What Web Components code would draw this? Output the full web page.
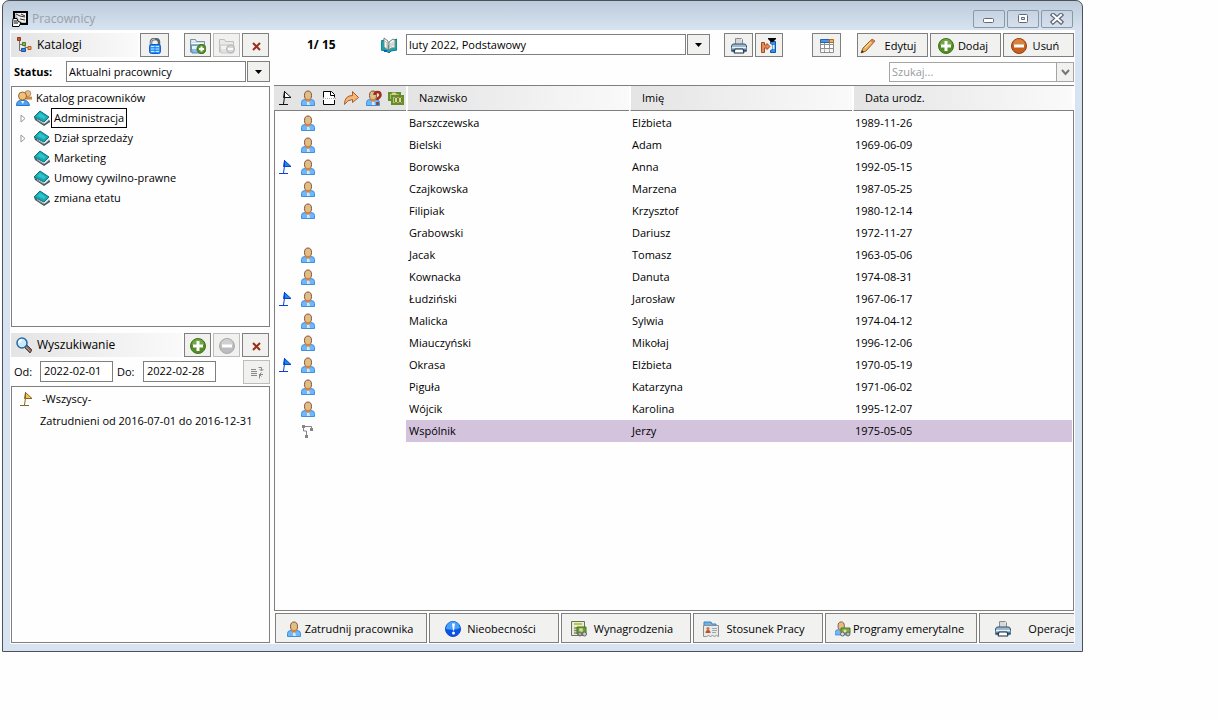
<!DOCTYPE html>
<html lang="pl">
<head>
<meta charset="utf-8">
<meta name="viewport" content="width=device-width, initial-scale=1">
<title>Pracownicy</title>
<style>
  :root {
    --line: #7f7f7f;
    --face: #f1f1f0;
    --frame: #d7e3f0;
    --bar: linear-gradient(to right, #e4e4e4, #fafafa);
    --selected: #d3c3dc;
  }
  body {
    margin: 0;
    background: #fefefe;
    color: #000;
    font: 11px/20px "Open Sans", "Noto Sans", sans-serif;
  }
  app-window {
    margin: 0 135px 0 2px;
    min-height: calc(100vh - 69px);
  }
  .side, .main, .group { display: flex; flex-direction: column; min-width: 0; }
  .side { flex: 0 0 259px; }
  .main { flex: 1; }
  .group { gap: 4px; }
  .group + .group { gap: 2px; margin-top: 6px; flex: 1; }
  .row { display: flex; align-items: center; gap: 2px; }
  .dates { height: 25px; gap: 4px; padding-left: 3px; }
  .dates tool-button { margin-left: auto; }
  .tree { min-height: 238px; }
  .fill { flex: 1; }
  .top { height: 24px; }
  .count { flex: 0 0 72px; padding-left: 33px; font-weight: 700; font-size: 12px; }
  .period { align-self: flex-start; flex: 0 1 304px; margin: 1px 12px 0 7px; }
  .tools { margin-left: auto; }
  .search { display: flex; justify-content: flex-end; margin: 5px 0 3px; }
  employee-grid { flex: 1; }
  action-bar { margin-top: 2px; }
</style>
</head>
<body>

<app-window caption="Pracownicy">
  <div class="side">
    <div class="group">
      <panel-bar icon="tree" caption="Katalogi">
        <tool-button icon="lock" label="Zablokuj" style="--w:29px;margin-right:13px"></tool-button>
        <tool-button icon="folder-add" label="Dodaj katalog"></tool-button>
        <tool-button icon="folder-del" label="Usuń katalog" off></tool-button>
        <tool-button icon="cross" label="Zamknij katalogi"></tool-button>
      </panel-bar>
      <combo-box caption="Status:" value="Aktualni pracownicy"></combo-box>
      <list-frame class="tree">
        <tree-item icon="people" text="Katalog pracowników" root></tree-item>
        <tree-item icon="book" text="Administracja" branch current></tree-item>
        <tree-item icon="book" text="Dział sprzedaży" branch></tree-item>
        <tree-item icon="book" text="Marketing"></tree-item>
        <tree-item icon="book" text="Umowy cywilno-prawne"></tree-item>
        <tree-item icon="book" text="zmiana etatu"></tree-item>
      </list-frame>
    </div>
    <div class="group">
      <panel-bar icon="lens" caption="Wyszukiwanie">
        <tool-button icon="plus" label="Dodaj filtr"></tool-button>
        <tool-button icon="minus-off" label="Usuń filtr" off></tool-button>
        <tool-button icon="cross" label="Zamknij wyszukiwanie"></tool-button>
      </panel-bar>
      <div class="row dates">
        <date-field caption="Od:" value="2022-02-01"></date-field>
        <date-field caption="Do:" value="2022-02-28"></date-field>
        <tool-button icon="sort" label="Sortuj" off></tool-button>
      </div>
      <list-frame class="fill">
        <filter-item icon="flag-yellow" text="-Wszyscy-"></filter-item>
        <filter-item text="Zatrudnieni od 2016-07-01 do 2016-12-31"></filter-item>
      </list-frame>
    </div>
  </div>

  <div class="main">
    <div class="row top">
      <span class="count">1/ 15</span>
      <ui-icon name="open-book"></ui-icon>
      <combo-box class="period" label="Okres" value="luty 2022, Podstawowy"></combo-box>
      <tool-button icon="printer" label="Drukuj" style="--w:29px"></tool-button>
      <tool-button icon="export" label="Eksport" style="--w:28px"></tool-button>
      <div class="row tools">
        <tool-button icon="columns" label="Kolumny" style="--w:29px;margin-right:14px"></tool-button>
        <tool-button icon="pencil" text="Edytuj" style="--w:71px;--start:2px;--end:2px"></tool-button>
        <tool-button icon="plus" text="Dodaj" style="--w:71px;--start:7px;--end:8px"></tool-button>
        <tool-button icon="minus" text="Usuń" style="--w:71px;--start:7px;--end:8px"></tool-button>
      </div>
    </div>
    <div class="search"><search-box hint="Szukaj..."></search-box></div>
    <employee-grid></employee-grid>
    <action-bar>
      <tool-button icon="person" text="Zatrudnij pracownika" style="--w:152px;--h:30px;--start:10px;--end:10px"></tool-button>
      <tool-button icon="alert" text="Nieobecności" style="--w:130px;--h:30px;--start:15px;--end:16px"></tool-button>
      <tool-button icon="payroll" text="Wynagrodzenia" style="--w:130px;--h:30px;--start:9px;--end:10px"></tool-button>
      <tool-button icon="contract" text="Stosunek Pracy" style="--w:130px;--h:30px;--start:9px;--end:10px"></tool-button>
      <tool-button icon="pension" text="Programy emerytalne" style="--w:152px;--h:30px;--start:9px;--end:10px"></tool-button>
      <tool-button icon="printer" text="Operacje" style="--w:130px;--h:30px;--start:15px;--end:16px"></tool-button>
    </action-bar>
  </div>
</app-window>

<script>
// ---- icons, all on a 16x16 grid ----
const PERSON = `
  <path d="M1.500 15.500v-3q0-3 3.500-3l3 2 3-2q3.500 0 3.500 3v3z" fill="#6cb8fb" stroke="#3f8fdc"/>
  <path d="M7 11h2l1 4H7z" fill="#d4e8f5"/>
  <ellipse cx="8" cy="5.500" rx="3.500" ry="4.500" fill="#dcc085" stroke="#8f4a38"/>
  <path d="M5 8q3 2 6 0l-1 3q-2 1.500-4 0z" fill="#d98240"/>`;
const FLAG = (line, fill) => `
  <path d="M6.500 1.500 13 7.500H5.500z" fill="${fill}" stroke="${line}"/>
  <path d="M6.500 1v6L5.500 14M1 14.500h9" fill="none" stroke="${line}"/>`;
const ROUND = (dark, mid, light, plus) => `
  <circle cx="8" cy="8" r="7.500" fill="${mid}" stroke="${dark}"/>
  <path d="M2 7a6 6 0 0 1 12 0q-6 2-12 0z" fill="${light}" opacity=".6"/>
  <path d="M3 6.500h10v3H3z" fill="#fff"/>
  ${plus ? '<path d="M6.500 3h3v10h-3z" fill="#fff"/>' : ""}`;
const FOLDER = `
  <path d="M.5 14V1.500h5l1 2h8V14z" fill="#cfdde6" stroke="#7b91a0"/>
  <path d="M2 3h3M1.500 5.500h12" stroke="#f8fcff"/>
  <path d="M1 7h14l-1 8H2z" fill="#8bbfe8" stroke="#5c87ad"/>
  <path d="M2 8h12v3H2z" fill="#e3f2fb"/>`;

const ICONS = {
  person: PERSON,
  app: `
    <path d="M2 1h13v12H2z" fill="#bbb" stroke="#000" stroke-width="2"/>
    <path d="M3 2h11v9H8z" fill="#ededed"/>
    <path d="M4 3l4 2 5 1M9 3l4 2M8 8l5 1" fill="none" stroke="#333"/>
    <path d="M1 7.500h4l1 3 3 1-2 4H.5z" fill="#fff" stroke="#000"/>
    <path d="M2 10h3M2 12h4" stroke="#000"/>`,
  tree: `
    <path d="M3.500 4v9.500h6M4 7.500h5v3h4" fill="none" stroke="#6f7275"/>
    <path d="M1.500.5h3v3h-3z" fill="#c4583a" stroke="#943719"/>
    <path d="M6.500 5.500h3v3h-3z" fill="#8db84a" stroke="#4d792a"/>
    <path d="M5.500 11.500h4v3h-4z" fill="#3686dd" stroke="#1952a3"/>
    <path d="M12 9.500h3v3h-3z" fill="#f0a45c" stroke="#b85d22"/>`,
  lock: `
    <path d="M4 8V4q0-3 4-3t4 3v4" fill="none" stroke="#5b666c" stroke-width="2.500"/>
    <path d="M4 7V4q0-3 4-3" fill="none" stroke="#b9c4c8"/>
    <rect x="2.500" y="6.500" width="11" height="9" rx="2" fill="#2496ff" stroke="#2054cc"/>
    <path d="M4 8.500h8M4 11h8M4 13.500h8" stroke="#c9eaff"/>
    <path d="M8 8v7" stroke="#217fe2"/>`,
  "folder-add": FOLDER + `
    <circle cx="11.500" cy="11" r="4.500" fill="#5c962e" stroke="#396b16"/>
    <path d="M11.500 8.500v5M9 11h5" stroke="#fff" stroke-width="2"/>`,
  "folder-del": `
    <g opacity=".7"><path d="M.5 14V1.500h5l1 2h8V14z" fill="#e6e6e6" stroke="#aaa"/>
    <path d="M1 7h14l-1 8H2z" fill="#ddd" stroke="#bbb"/><path d="M2 8h12v3H2z" fill="#f3f3f3"/>
    <circle cx="11.500" cy="11" r="4" fill="#ccc" stroke="#999"/>
    <path d="M9 11h5" stroke="#fff" stroke-width="2"/></g>`,
  cross: `<path d="M5 5l7 7M12 5l-7 7" stroke="#99301a" stroke-width="2"/>`,
  people: `
    <g transform="translate(7 0) scale(.6)">
      <path d="M1 16v-5h14v5z" fill="#c98a45"/>
      <circle cx="8" cy="6" r="5" fill="#e4bd82" stroke="#a4622f"/>
    </g>
    <path d="M.5 15.500q0-5 4-5h4q4 0 5 5z" fill="#4ea3f3" stroke="#2a76c4"/>
    <circle cx="6.500" cy="6" r="4" fill="#efc37c" stroke="#a46031"/>
    <path d="M5 11h3l-1 3z" fill="#fff"/>`,
  book: `
    <path d="M0 7l1 3 9 6 6-4v-2l-6 3z" fill="#4b565b"/>
    <path d="M1 8l9 6 6-4-1-2-5 3z" fill="#e1e5e8"/>
    <path d="M3 10l7 4M13 12l2-2" stroke="#8b979d"/>
    <path d="M0 7l6-6 9 6-5 5z" fill="#16a9b4" stroke="#087383"/>
    <path d="M3 6l3-3 6 4-2 2z" fill="#35c2c7"/>`,
  "open-book": `
    <path d="M0 4l3-1 6 8 4-8 3-1v11l-6 1-2 2-3-2-5-1z" fill="#14a6b1" stroke="#107782"/>
    <path d="M3 1l4 3v9l-4-3z" fill="#f8f8f4" stroke="#77877f"/>
    <path d="M8 13V5l4-3 2 1v8q-4-1-6 2z" fill="#eef1ed" stroke="#77877f"/>
    <path d="M4 4l2 2v5M10 6v4M12 5v4" fill="none" stroke="#b4c0b5"/>
    <path d="M3 14h3" stroke="#125bb9" stroke-width="2"/>`,
  lens: `
    <path d="M9 9l2-1 5 5-2 3-5-5z" fill="#7d615a" stroke="#57433e"/>
    <path d="M10 10l4 4" stroke="#b1a19b"/>
    <circle cx="6" cy="6" r="5" fill="#c5ecff" stroke="#2969a8" stroke-width="1.500"/>
    <path d="M3 6q0-3 3-3" fill="none" stroke="#fff" stroke-width="2"/>`,
  plus: ROUND("#427317", "#538d27", "#86b85b", true),
  minus: ROUND("#963e13", "#c6601c", "#e99953", false),
  "minus-off": ROUND("#aaa", "#bcbcc0", "#ddd", false),
  sort: `
    <path d="M2 5.500h5M2 7.500h6M2 9.500h6M2 11.500h6" stroke="#888"/>
    <path d="M9.500 3.500h3v3M10.500 5l2 2 2-2M14 10.500h-3.500v4M12.500 8.500l-2 2 2 2" fill="none" stroke="#888"/>`,
  "flag-line": FLAG("#111", "#fff"),
  "flag-blue": FLAG("#0b3fd5", "#148ce8"),
  "flag-yellow": FLAG("#826725", "#ffc14f"),
  page: `
    <path d="M1.500 7.500v-6h8l3 3v3M1.500 10v4.500h11V10" fill="#fff" stroke="#000"/>
    <path d="M2 7h10v4H2z" fill="#fff"/>
    <path d="M8.500 1.500v4h4" fill="none" stroke="#000"/><path d="M1 8.500h13" stroke="#aaa" stroke-dasharray="1 1"/>`,
  arrow: `<path d="M.5 14.500q0-9 8-9v-4l6 6-6 5v-3q-5 0-8 5z" fill="#f5b778" stroke="#a85d2c"/>`,
  asker: `<g transform="translate(-1 0)">${PERSON}</g>
    <path d="M8.500 5q0-3 3-3t3 3q0 2-3 3.500V10M11.500 12v3" fill="none" stroke="#a22d16" stroke-width="2.500"/>`,
  money: `
    <path d="M1 3h11v7H1z" fill="#b9bd76" stroke="#609128" stroke-width="2"/>
    <path d="M4 6h11v8H4z" fill="#c6c084" stroke="#609128" stroke-width="2"/>
    <path d="M4 4q2-1 4 0" fill="none" stroke="#e4d19e" stroke-width="2"/>
    <path d="M6.500 8q1.500-2 3 0v4q-1.500 2-3 0zM10.500 8q1.500-2 3 0v4q-1.500 2-3 0z" fill="#e4d19e" stroke="#6a7d29"/>`,
  partner: `<g fill="#858585"><path d="M2 2h3v3H2zM10 5h3v3h-3zM5 12h3v3H5z"/></g>
    <path d="M4 3.500h7.500V6M3.500 5v3h3v5" fill="none" stroke="#858585"/>`,
  printer: `
    <path d="M4.500 7V.5h6l1 1V7z" fill="#fff" stroke="#8b8b8f"/>
    <path d="M5 1h5l1 2v3H5z" fill="#d8d8dc"/>
    <path d="M1 7q0-1 2-1h10q2 0 2 1l1 3v3H0v-3z" fill="#9ab9d3" stroke="#344e69"/>
    <path d="M1 9.500h14" stroke="#e6f1f8"/><path d="M1 12.500h14" stroke="#234f82" stroke-width="2"/>
    <path d="M4 11h8l1 4H3z" fill="#fff" stroke="#182a3d"/>`,
  export: `
    <path d="M.5 4.500h3V7H6V5.500l3 3-3 3V10H3.500v4.500h-3z" fill="#e58a58" stroke="#a8481c"/>
    <path d="M9.500 3.500h5v11h-5v-2l2-1v-5l-2-1z" fill="#2a94ec" stroke="#1656aa"/><path d="M11.500 7h2v4h-2z" fill="#d5f0ff"/>
    <path d="M7 0h8v1l-3 3H10L7 1z" fill="#000"/>`,
  columns: `
    <path d="M1.500 2.500h13v12h-13z" fill="#fff" stroke="#8d8d94"/>
    <path d="M1 6.500h14M1 10.500h14M5.500 5v9M10.500 5v9" stroke="#8d8d94"/>
    <path d="M2 12h12" stroke="#e4e4e7"/>
    <path d="M1.500 1.500h9v3h-9z" fill="#4f97dc" stroke="#2460ad"/><path d="M10.500 1.500h4v3h-4z" fill="#f2b35a" stroke="#b26a1e"/>`,
  pencil: `
    <path d="M1 15l2-5L12 1l3 2-9 10z" fill="#efb25c" stroke="#9a6124"/>
    <path d="M5 10l8-8" stroke="#ffe2a0"/><path d="M12 1l3 2-2 2-3-2z" fill="#d77a5c"/><path d="M1 15l1-3 2 2z" fill="#333"/>`,
  alert: `
    <circle cx="8" cy="8" r="7.500" fill="#0b54e4" stroke="#0b4ed0"/>
    <path d="M1 8a7 7 0 0 1 14-1q-5 3-14 1z" fill="#46a2f8"/>
    <path d="M7 2.500h3l-1 7H8z" fill="#fff"/><circle cx="8.500" cy="12" r="1.500" fill="#fff"/>`,
  payroll: `
    <path d="M.5.500h13v14H.5z" fill="#e8ebd6" stroke="#687061"/>
    <path d="M3 2h8v2H3z" fill="#c5c23f"/><path d="M3 7h3M3 9.500h3M3 12h3" stroke="#848c79" stroke-width="1.500"/>
    <path d="M6 6h9v7H6z" fill="#6f9f35" stroke="#43721f"/>
    <circle cx="10" cy="9" r="2" fill="#d3d998"/><circle cx="9" cy="13" r="2" fill="#aaa" stroke="#666"/><circle cx="13.500" cy="13" r="2" fill="#ccc" stroke="#666"/>`,
  contract: `
    <path d="M1 5V1h7l1 2h4v4z" fill="#69b4ef" stroke="#3d83be"/>
    <path d="M.5 15.500v-11h15v11l-2-1-2 1-2-1-2 1-2-1-2 1z" fill="#e7e9ea" stroke="#8c9093"/>
    <circle cx="5" cy="7.500" r="1.500" fill="#cf7142"/><path d="M2.500 12q0-3 2.500-3t2.500 3z" fill="#bd5127"/>
    <path d="M9 7.500h5M9 9.500h5M9 11.500h4" stroke="#a4a7aa"/>`,
  pension: `
    <g transform="translate(-1 0) scale(.9)">${PERSON}</g>
    <path d="M6 7h9v5H6z" fill="#82ac3e" stroke="#49782a"/>
    <circle cx="7.500" cy="13" r="2" fill="#ddd" stroke="#666"/><circle cx="13" cy="13" r="2" fill="#bbb" stroke="#666"/><circle cx="10" cy="10" r="1.500" fill="#e3e3a5"/>`,
};

class UiIcon extends HTMLElement {
  connectedCallback() {
    this.attachShadow({ mode: "open" }).innerHTML = `
      <style>
        :host { display: block; flex: 0 0 16px; width: 16px; height: 16px; }
        svg { display: block; }
      </style>
      <svg width="16" height="16" viewBox="0 0 16 16" aria-hidden="true">${ICONS[this.getAttribute("name")] || ""}</svg>`;
  }
}

/* <tool-button icon text label off>: --w, --h, --start and --end set its box */
class ToolButton extends HTMLElement {
  connectedCallback() {
    const text = this.getAttribute("text");
    const label = this.getAttribute("label");
    this.attachShadow({ mode: "open" }).innerHTML = `
      <style>
        :host { display: block; flex: none; width: var(--w, 27px); height: var(--h, 24px); }
        button {
          box-sizing: border-box;
          width: 100%;
          height: 100%;
          display: flex;
          align-items: center;
          justify-content: center;
          margin: 0;
          padding: 1px var(--end, 0) 0 var(--start, 0);
          border: 1px solid var(--line);
          background: var(--face);
          color: inherit;
          font: inherit;
          white-space: nowrap;
        }
        button:disabled { border-color: #bdbdbd; }
        span { flex: 1; text-align: center; }
      </style>
      <button type="button" ${label ? `aria-label="${label}"` : ""} ${this.hasAttribute("off") ? "disabled" : ""}>
        <ui-icon name="${this.getAttribute("icon")}"></ui-icon>${text ? `<span>${text}</span>` : ""}
      </button>`;
  }
}

class AppWindow extends HTMLElement {
  connectedCallback() {
    this.attachShadow({ mode: "open" }).innerHTML = `
      <style>
        :host {
          box-sizing: border-box;
          display: flex;
          flex-direction: column;
          border: 1px solid #4c5158;
          border-radius: 7px 7px 0 0;
          padding: 0 7px 7px;
          background: linear-gradient(#bccbdb, var(--frame) 29px);
        }
        header { display: flex; align-items: center; height: 29px; padding: 6px 0 0 2px; box-sizing: border-box; }
        h1 { flex: 1; margin: 0 0 0 4px; font: inherit; font-size: 12px; color: #98a1aa; }
        .controls { display: flex; gap: 2px; padding-right: 2px; }
        .controls button {
          width: 32px;
          height: 18px;
          padding: 0;
          border: 1px solid #8b98a8;
          border-radius: 2px;
          background: linear-gradient(#c6d3e2, #d5e0ec);
        }
        .controls svg { display: block; margin: auto; }
        main { flex: 1; display: flex; gap: 4px; padding: 3px 1px 1px; background: #fefefe; }
      </style>
      <header>
        <ui-icon name="app"></ui-icon>
        <h1>${this.getAttribute("caption")}</h1>
        <div class="controls">
          <button type="button" aria-label="Minimalizuj"><svg width="14" height="12"><rect x="1.500" y="5.500" width="10" height="4" rx="1" fill="#fff" stroke="#626879"/></svg></button>
          <button type="button" aria-label="Maksymalizuj"><svg width="14" height="12"><rect x="2.500" y="1.500" width="9" height="8" rx="1" fill="#fff" stroke="#626879"/><path d="M5.500 4.500h3v2h-3z" fill="#dce4ee" stroke="#626879"/></svg></button>
          <button type="button" aria-label="Zamknij"><svg width="14" height="12"><path d="M3 2l8 7M11 2l-8 7" stroke="#626879" stroke-width="4.500" stroke-linecap="square"/><path d="M3 2l8 7M11 2l-8 7" stroke="#fff" stroke-width="2" stroke-linecap="square"/></svg></button>
        </div>
      </header>
      <main><slot></slot></main>`;
  }
}

class PanelBar extends HTMLElement {
  connectedCallback() {
    this.attachShadow({ mode: "open" }).innerHTML = `
      <style>
        :host { display: flex; gap: 2px; height: 24px; padding-right: 1px; }
        h2 {
          flex: 1;
          display: flex;
          align-items: center;
          gap: 5px;
          margin: 0;
          padding-left: 5px;
          font: inherit;
          font-size: 12px;
          background: var(--bar);
        }
      </style>
      <h2><ui-icon name="${this.getAttribute("icon")}"></ui-icon>${this.getAttribute("caption")}</h2>
      <slot></slot>`;
  }
}

class ComboBox extends HTMLElement {
  connectedCallback() {
    const caption = this.getAttribute("caption");
    this.attachShadow({ mode: "open" }).innerHTML = `
      <style>
        :host { display: flex; align-items: center; height: 21px; }
        label { flex: 0 0 52px; padding-left: 3px; font-weight: 700; }
        select {
          appearance: none;
          box-sizing: border-box;
          flex: 1;
          min-width: 0;
          height: 21px;
          margin: 0 1px 0 0;
          padding: 0 2px 2px;
          border: 1px solid var(--line);
          border-radius: 0;
          background: #fff;
          color: inherit;
          font: inherit;
        }
        button {
          flex: 0 0 23px;
          height: 21px;
          padding: 0;
          border: 1px solid var(--line);
          background: var(--face);
        }
        svg { display: block; margin: auto; }
      </style>
      ${caption ? `<label for="pole">${caption}</label>` : ""}
      <select id="pole" ${caption ? "" : `aria-label="${this.getAttribute("label")}"`}>
        <option>${this.getAttribute("value")}</option>
      </select>
      <button type="button" aria-label="Rozwiń"><svg width="7" height="4"><path d="M0 0h7L3.500 4z"/></svg></button>`;
  }
}

class DateField extends HTMLElement {
  connectedCallback() {
    this.attachShadow({ mode: "open" }).innerHTML = `
      <style>
        :host { display: flex; align-items: center; }
        label { width: 26px; }
        input {
          box-sizing: border-box;
          width: 73px;
          height: 21px;
          padding: 0 2px 2px 3px;
          border: 1px solid var(--line);
          color: inherit;
          font: inherit;
        }
      </style>
      <label for="data">${this.getAttribute("caption")}</label>
      <input id="data" type="text" value="${this.getAttribute("value")}">`;
  }
}

class SearchBox extends HTMLElement {
  connectedCallback() {
    const hint = this.getAttribute("hint");
    this.attachShadow({ mode: "open" }).innerHTML = `
      <style>
        :host { box-sizing: border-box; display: flex; width: 185px; height: 20px; border: 1px solid #a5a5a5; }
        input { flex: 1; min-width: 0; border: 0; padding: 0 2px; font: inherit; background: #fff; }
        input::placeholder { color: #9b9b9b; opacity: 1; }
        button { width: 17px; padding: 0; border: 0; border-left: 1px solid #a5a5a5; background: var(--face); }
        svg { display: block; margin: auto; }
      </style>
      <input type="text" placeholder="${hint}" aria-label="${hint}">
      <button type="button" aria-label="Historia"><svg width="9" height="7"><path d="M1 1l3.500 4L8 1" fill="none" stroke="#777" stroke-width="2"/></svg></button>`;
  }
}

class ListFrame extends HTMLElement {
  connectedCallback() {
    this.attachShadow({ mode: "open" }).innerHTML = `
      <style>
        :host { display: block; border: 1px solid var(--line); background: #fefefe; padding-top: 1px; }
      </style>
      <slot></slot>`;
  }
}

class TreeItem extends HTMLElement {
  connectedCallback() {
    const branch = this.hasAttribute("branch");
    this.attachShadow({ mode: "open" }).innerHTML = `
      <style>
        :host { display: flex; align-items: center; height: 20px; padding-left: 7px; }
        :host([root]) { padding-left: 4px; }
        svg { width: 15px; height: 9px; }
        :host([root]) svg { display: none; }
        span { margin-left: 1px; padding: 0 2px; line-height: 18px; border: 1px solid transparent; white-space: nowrap; }
        :host([current]) span { border-color: #000; }
      </style>
      <svg viewBox="0 0 15 9">${branch ? '<path d="M2 1v7l4-3.500z" fill="#fff" stroke="#999"/>' : ""}</svg>
      <ui-icon name="${this.getAttribute("icon")}"></ui-icon>
      <span>${this.getAttribute("text")}</span>`;
  }
}

class FilterItem extends HTMLElement {
  connectedCallback() {
    const icon = this.getAttribute("icon");
    this.attachShadow({ mode: "open" }).innerHTML = `
      <style>
        :host { display: flex; align-items: center; gap: 5px; height: 22px; padding-left: 7px; white-space: nowrap; }
        :host([icon]) { gap: 7px; }
      </style>
      <ui-icon name="${icon || ""}"></ui-icon>
      <span>${this.getAttribute("text")}</span>`;
  }
}

const EMPLOYEES = [
  ["Barszczewska", "Elżbieta", "1989-11-26"],
  ["Bielski", "Adam", "1969-06-09"],
  ["Borowska", "Anna", "1992-05-15", { flag: true }],
  ["Czajkowska", "Marzena", "1987-05-25"],
  ["Filipiak", "Krzysztof", "1980-12-14"],
  ["Grabowski", "Dariusz", "1972-11-27", { icon: "" }],
  ["Jacak", "Tomasz", "1963-05-06"],
  ["Kownacka", "Danuta", "1974-08-31"],
  ["Łudziński", "Jarosław", "1967-06-17", { flag: true }],
  ["Malicka", "Sylwia", "1974-04-12"],
  ["Miauczyński", "Mikołaj", "1996-12-06"],
  ["Okrasa", "Elżbieta", "1970-05-19", { flag: true }],
  ["Piguła", "Katarzyna", "1971-06-02"],
  ["Wójcik", "Karolina", "1995-12-07"],
  ["Wspólnik", "Jerzy", "1975-05-05", { icon: "partner", selected: true }],
];

class EmployeeGrid extends HTMLElement {
  connectedCallback() {
    const heads = ["flag-line", "person", "page", "arrow", "asker", "money"]
      .map((name) => `<th class="mark"><ui-icon name="${name}"></ui-icon></th>`)
      .join("");
    const rows = EMPLOYEES.map(([surname, name, born, opt = {}]) => {
      const icon = opt.icon === undefined ? "person" : opt.icon;
      return `<tr class="${opt.selected ? "selected" : ""}">
        <td class="mark">${opt.flag ? '<ui-icon name="flag-blue"></ui-icon>' : ""}</td>
        <td class="mark">${icon ? `<ui-icon name="${icon}"></ui-icon>` : ""}</td>
        <td></td><td></td><td></td><td></td>
        <td class="data">${surname}</td><td class="data">${name}</td><td class="data">${born}</td>
      </tr>`;
    }).join("");

    this.attachShadow({ mode: "open" }).innerHTML = `
      <style>
        :host { display: grid; grid-template-rows: 24px 1fr; border-top: 1px solid var(--line); }
        .frame { grid-area: 2 / 1; border: 1px solid var(--line); }
        table {
          grid-area: 1 / 1 / 3 / 2;
          align-self: start;
          width: 100%;
          table-layout: fixed;
          border-spacing: 0;
          padding-right: 2px;
        }
        col.slot { width: 22px; }
        col.name { width: 223px; }
        th, td { padding: 0; text-align: left; font-weight: 400; }
        th {
          height: 24px;
          border-bottom: 2px solid transparent;
          background: var(--bar) padding-box;
        }
        th.mark { background: #e4e4e4 padding-box; }
        th.data { padding-left: 11px; border-left: 2px solid #fefefe; }
        td { height: 22px; line-height: 22px; }
        .mark { padding-left: 4px; }
        td.data { padding-left: 3px; }
        .selected .data { background: var(--selected); }
      </style>
      <div class="frame"></div>
      <table>
        <colgroup><col class="slot" span="6"><col class="name" span="2"><col></colgroup>
        <thead><tr>${heads}<th class="data">Nazwisko</th><th class="data">Imię</th><th class="data">Data urodz.</th></tr></thead>
        <tbody>${rows}</tbody>
      </table>`;
  }
}

class ActionBar extends HTMLElement {
  connectedCallback() {
    this.attachShadow({ mode: "open" }).innerHTML = `
      <style>
        :host { display: flex; gap: 2px; padding-left: 1px; overflow: hidden; }
      </style>
      <slot></slot>`;
  }
}

customElements.define("ui-icon", UiIcon);
customElements.define("tool-button", ToolButton);
customElements.define("app-window", AppWindow);
customElements.define("panel-bar", PanelBar);
customElements.define("combo-box", ComboBox);
customElements.define("date-field", DateField);
customElements.define("search-box", SearchBox);
customElements.define("list-frame", ListFrame);
customElements.define("tree-item", TreeItem);
customElements.define("filter-item", FilterItem);
customElements.define("employee-grid", EmployeeGrid);
customElements.define("action-bar", ActionBar);
</script>
</body>
</html>
